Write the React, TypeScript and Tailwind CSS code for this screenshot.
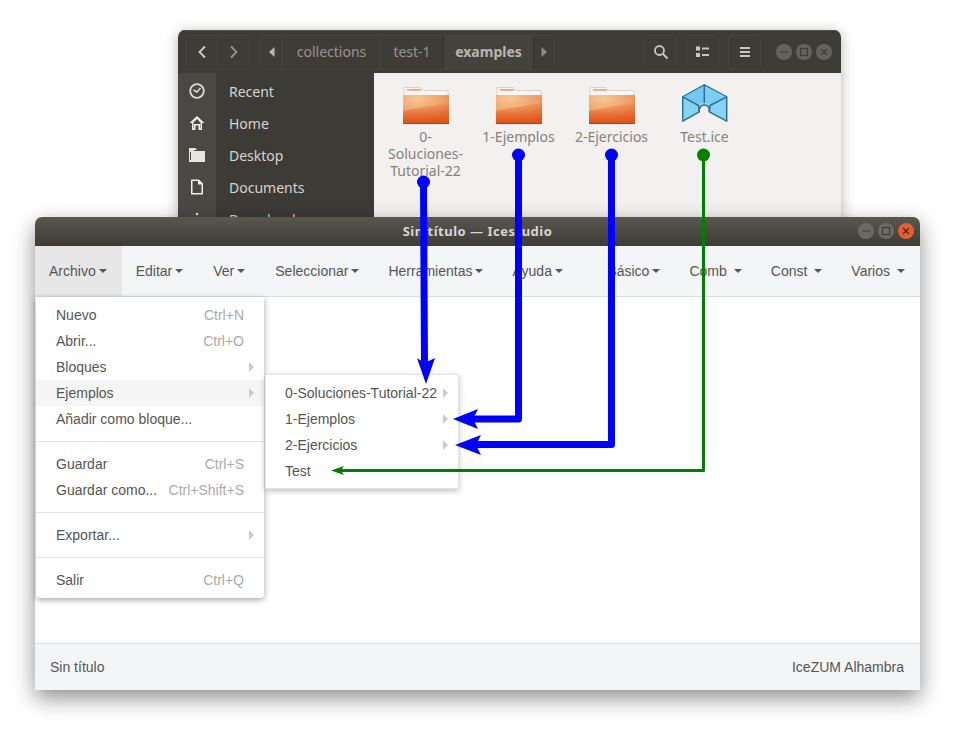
import React from 'react';

const Folder: React.FC<{ id: string }> = ({ id }) => (
    <svg width="48" height="41" viewBox="0 0 48 41">
        <defs>
            <radialGradient id={id} cx="0.3" cy="0.1" r="1.2">
                <stop offset="0" stopColor="#f6c796" />
                <stop offset="0.5" stopColor="#ef9f66" />
                <stop offset="1" stopColor="#e6642a" />
            </radialGradient>
            <linearGradient id={id + 'b'} x1="0" y1="0" x2="0" y2="1">
                <stop offset="0" stopColor="#e2551a" stopOpacity="0.1" />
                <stop offset="1" stopColor="#e04c12" stopOpacity="0.95" />
            </linearGradient>
        </defs>
        <path d="M2 12V4.500q0-1 1-1H18l3 3h24q1 0 1 1V12z" fill="#f7f6f4" stroke="#cfcbc6" strokeWidth="0.8" />
        <rect x="5" y="5" width="14" height="1.800" fill="#f2a678" />
        <path d="M1 11h46v28q0 1-1 1H2q-1 0-1-1z" fill={`url(#${id})`} />
        <path d="M1 27Q24 22 47 19V39q0 1-1 1H2q-1 0-1-1z" fill={`url(#${id}b)`} />
        <path d="M1 39.500h46" stroke="#a8431a" strokeWidth="1" />
    </svg>
);

const IceIcon: React.FC = () => (
    <svg width="46" height="41" viewBox="0 0 46 41">
        <path d="M22.300 .8L44.700 12.800V37.200L27.300 27.800V26A5 5 0 0 0 17.300 26V27.800L.7 37.200V12.800z" fill="#86d4f4" stroke="#2f6f8f" strokeWidth="1.500" strokeLinejoin="round" />
        <path d="M22.300 1.500L1.500 13L15 21Q20 17 22.300 19z" fill="#72c8f0" />
        <path d="M22.300 1.500L44 13L30 21Q25 17 22.300 19z" fill="#7bcdf2" />
        <path d="M22.300 .8V19M.7 12.800L16.500 21.500L17.300 27.800M44.700 12.800L28 21.500L27.300 27.800" fill="none" stroke="#2f6f8f" strokeWidth="1.500" />
    </svg>
);

const sideIcons: Record<string, React.ReactNode> = {
    Recent: (
        <g fill="none" stroke="#dedcd6" strokeWidth="1.800">
            <circle cx="8" cy="8" r="6.800" />
            <path d="M4.500 7L8 9L11.500 5" strokeWidth="1.500" />
        </g>
    ),
    Home: (
        <path d="M8 1L.5 8H3V15H6.500V10.500H9.500V15H13V8H15.500zM4.500 7.500L8 4L11.500 7.500V13.500H11V9H5V13.500H4.500z" fill="#f0eeea" />
    ),
    Desktop: (
        <path d="M0 1H6.500L8 3H5V4H16V15H0zM2 5V13H1V5z" fill="#e6e4e0" fillRule="evenodd" />
    ),
    Documents: (
        <path d="M2 0.500H10L14 4.500V15.500H2zM3.500 2V14H12.500V5.500H9V2z" fill="#f0eeea" fillRule="evenodd" />
    ),
    Downloads: <circle cx="8" cy="3" r="1.300" fill="#dedcd6" />,
};

const SideRow: React.FC<{ label: string }> = ({ label }) => (
    <div className="flex items-center h-[32px] shrink-0">
        <div className="w-[38px] flex justify-center">
            <svg width="16" height="16" viewBox="0 0 16 16">{sideIcons[label]}</svg>
        </div>
        <span className="ml-[13px] text-[14px] text-[#d6d4ce]">{label}</span>
    </div>
);

const FileItem: React.FC<{ name: string; icon: React.ReactNode }> = ({ name, icon }) => (
    <div className="w-[93px] flex flex-col items-center">
        <div className="h-[41px] flex items-end">{icon}</div>
        <div className="mt-[3px] w-[86px] text-center text-[14px] leading-[17px] text-[#85817c] break-words">{name}</div>
    </div>
);

const HeadButton: React.FC<{ children: React.ReactNode }> = ({ children }) => (
    <div className="w-[33px] h-[35px] rounded-[4px] border border-[#47443f] flex items-center justify-center">{children}</div>
);

const WinButton: React.FC<{ kind: 'min' | 'max' | 'close'; bg: string; stroke: string }> = ({ kind, bg, stroke }) => (
    <svg width="16" height="16" viewBox="0 0 16 16" className={bg + ' rounded-full'}>
        {kind === 'min' && <path d="M4 8H12" stroke={stroke} strokeWidth="1.200" />}
        {kind === 'max' && <rect x="4.500" y="4.500" width="7" height="7" fill="none" stroke={stroke} strokeWidth="1.200" />}
        {kind === 'close' && <path d="M5 5L11 11M11 5L5 11" stroke={stroke} strokeWidth="1.200" />}
    </svg>
);

const FilesWindow: React.FC = () => (
    <div className="absolute left-[178px] top-[30px] w-[663px] h-[220px] rounded-t-[7px] overflow-hidden flex flex-col shadow-[0_2px_14px_rgba(0,0,0,0.3)] font-['Noto_Sans','Open_Sans',sans-serif]">
        <div className="h-[43px] bg-[#3f3c37] flex items-center pl-[8px] pr-[9px] shrink-0 border-t border-[#55524c]">
            <div className="flex w-[64px] h-[35px] rounded-[4px] border border-[#47443f]">
                <div className="w-[32px] flex items-center justify-center border-r border-[#47443f]">
                    <svg width="10" height="14" viewBox="0 0 10 14"><path d="M8 1.500L2.500 7L8 12.500" fill="none" stroke="#cfccc6" strokeWidth="1.800" /></svg>
                </div>
                <div className="w-[32px] flex items-center justify-center">
                    <svg width="10" height="14" viewBox="0 0 10 14"><path d="M2 1.500L7.500 7L2 12.500" fill="none" stroke="#96938c" strokeWidth="1.800" /></svg>
                </div>
            </div>
            <div className="ml-[10px] flex h-[35px] w-[295px] rounded-[4px] border border-[#47443f] items-stretch">
                <div className="w-[22px] flex items-center justify-center border-r border-[#47443f]">
                    <svg width="6" height="10" viewBox="0 0 6 10"><path d="M5.500 0V10L0 5z" fill="#b8b5ae" /></svg>
                </div>
                <div className="w-[98px] flex items-center justify-center pb-[1px] text-[14px] text-[#97948d] border-r border-[#47443f]">collections</div>
                <div className="w-[62px] flex items-center justify-center pb-[1px] text-[14px] text-[#97948d]">test-1</div>
                <div className="w-[91px] flex items-center justify-center pb-[1px] text-[14px] font-bold text-[#b9b6ae] bg-[#45423c] border-x border-[#35322e]">examples</div>
                <div className="flex-1 flex items-center justify-center">
                    <svg width="6" height="10" viewBox="0 0 6 10"><path d="M.5 0V10L6 5z" fill="#8f8c85" /></svg>
                </div>
            </div>
            <div className="ml-[89px]">
                <HeadButton>
                    <svg width="16" height="16" viewBox="0 0 16 16"><circle cx="6.500" cy="6.500" r="4.500" fill="none" stroke="#c9c6bf" strokeWidth="1.800" /><path d="M10 10L14.500 14.500" stroke="#c9c6bf" strokeWidth="2" /></svg>
                </HeadButton>
            </div>
            <div className="ml-[9px]">
                <HeadButton>
                    <svg width="14" height="12" viewBox="0 0 14 12"><path d="M0 .5H4V4.500H0zM0 7H4V11H0zM6 1.500H13V3.500H6zM6 8H13V10H6z" fill="#c9c6bf" /></svg>
                </HeadButton>
            </div>
            <div className="ml-[9px]">
                <HeadButton>
                    <svg width="12" height="12" viewBox="0 0 12 12"><path d="M1 1H11V3H1zM1 5H11V7H1zM1 9H11V11H1z" fill="#c9c6bf" /></svg>
                </HeadButton>
            </div>
            <div className="ml-auto flex gap-[4px]">
                <WinButton kind="min" bg="bg-[#65625b]" stroke="#3f3c37" />
                <WinButton kind="max" bg="bg-[#65625b]" stroke="#3f3c37" />
                <WinButton kind="close" bg="bg-[#65625b]" stroke="#3f3c37" />
            </div>
        </div>
        <div className="flex flex-1 min-h-0">
            <div className="relative w-[196px] bg-[#3d3b36] pt-[2px] flex flex-col shrink-0">
                <div className="absolute left-0 top-0 bottom-0 w-[38px] bg-[#4a4843]" />
                <div className="relative flex flex-col">
                    <SideRow label="Recent" />
                    <SideRow label="Home" />
                    <SideRow label="Desktop" />
                    <SideRow label="Documents" />
                    <SideRow label="Downloads" />
                </div>
            </div>
            <div className="flex-1 bg-[#f2f1f0] pl-[5px] pt-[11px] flex items-start">
                <FileItem name="0-Soluciones-Tutorial-22" icon={<Folder id="f0" />} />
                <FileItem name="1-Ejemplos" icon={<Folder id="f1" />} />
                <FileItem name="2-Ejercicios" icon={<Folder id="f2" />} />
                <FileItem name="Test.ice" icon={<IceIcon />} />
            </div>
        </div>
    </div>
);

const Caret: React.FC = () => (
    <span className="w-0 h-0 border-x-[4px] border-t-[4px] border-x-transparent border-t-[#555555]" />
);

const ToolItem: React.FC<{ label: string; active?: boolean; wide?: boolean; roomy?: boolean }> = ({ label, active, wide, roomy }) => (
    <div className={`flex items-center pl-[14px] ${roomy ? 'pr-[16px]' : 'pr-[15px]'} ${wide ? 'gap-[7px]' : 'gap-[3px]'} ${active ? 'bg-[#e7e7e7]' : ''}`}>
        <span>{label}</span>
        <Caret />
    </div>
);

const MenuArrow: React.FC = () => (
    <span className="ml-auto -mr-[10px] w-0 h-0 border-y-[5px] border-l-[5px] border-y-transparent border-l-[#cccccc]" />
);

const MenuRow: React.FC<{ label: string; shortcut?: string; arrow?: boolean; hover?: boolean; sub?: boolean }> = ({ label, shortcut, arrow, hover, sub }) => (
    <div className={`h-[26px] flex items-center ${sub ? 'pl-[19px]' : 'pl-[20px]'} pr-[20px] ${hover ? 'bg-[#f5f5f5]' : ''}`}>
        <span>{label}</span>
        {shortcut && <span className="ml-auto text-[#aaaaaa]">{shortcut}</span>}
        {arrow && <MenuArrow />}
    </div>
);

const MenuDivider: React.FC = () => <div className="my-[9px] h-px bg-[#e5e5e5]" />;

const IceWindow: React.FC = () => (
    <div className="absolute left-[35px] top-[217px] w-[885px] h-[473px] rounded-t-[7px] flex flex-col bg-white shadow-[0_8px_22px_rgba(0,0,0,0.45)] font-['Liberation_Sans',Arial,sans-serif] text-[14px] text-[#555555]">
        <div className="relative h-[29px] shrink-0 rounded-t-[7px] bg-gradient-to-b from-[#5a5750] to-[#3f3c36] flex items-center justify-center">
            <span className="font-['Noto_Sans','Open_Sans',sans-serif] font-bold text-[13px] tracking-[0.5px] text-[#d8d6cf]">Sin título — Icestudio</span>
            <div className="absolute right-[6px] top-[6px] flex gap-[4px]">
                <WinButton kind="min" bg="bg-[#6d6a63]" stroke="#3f3c37" />
                <WinButton kind="max" bg="bg-[#6d6a63]" stroke="#3f3c37" />
                <WinButton kind="close" bg="bg-[#e4602e]" stroke="#4a2414" />
            </div>
        </div>
        <div className="h-[51px] shrink-0 bg-[#f4f5f7] border-b border-[#d9dde3] flex items-stretch">
            <ToolItem label="Archivo" active />
            <ToolItem label="Editar" roomy />
            <ToolItem label="Ver" roomy />
            <ToolItem label="Seleccionar" />
            <ToolItem label="Herramientas" />
            <ToolItem label="Ayuda" />
            <div className="ml-auto flex items-stretch">
                <ToolItem label="Básico" />
                <ToolItem label="Comb" wide />
                <ToolItem label="Const" wide />
                <ToolItem label="Varios" wide />
            </div>
        </div>
        <div className="flex-1" />
        <div className="h-[47px] shrink-0 bg-[#f4f5f7] border-t border-[#d9dde3] flex items-center justify-between pl-[15px] pr-[16px]">
            <span>Sin título</span>
            <span>IceZUM Alhambra</span>
        </div>

        <div className="absolute left-[1px] top-[80px] w-[228px] py-[5px] bg-white rounded-b-[4px] shadow-[0_2px_6px_rgba(0,0,0,0.35)]">
            <MenuRow label="Nuevo" shortcut="Ctrl+N" />
            <MenuRow label="Abrir..." shortcut="Ctrl+O" />
            <MenuRow label="Bloques" arrow />
            <MenuRow label="Ejemplos" arrow hover />
            <MenuRow label="Añadir como bloque..." />
            <MenuDivider />
            <MenuRow label="Guardar" shortcut="Ctrl+S" />
            <MenuRow label="Guardar como..." shortcut="Ctrl+Shift+S" />
            <MenuDivider />
            <MenuRow label="Exportar..." arrow />
            <MenuDivider />
            <MenuRow label="Salir" shortcut="Ctrl+Q" />
        </div>
        <div className="absolute left-[230px] top-[157px] w-[194px] pt-[5px] pb-[4px] bg-white border border-[#e3e3e3] shadow-[0_2px_6px_rgba(0,0,0,0.25)]">
            <MenuRow label="0-Soluciones-Tutorial-22" arrow sub />
            <MenuRow label="1-Ejemplos" arrow sub />
            <MenuRow label="2-Ejercicios" arrow sub />
            <MenuRow label="Test" sub />
        </div>
    </div>
);

// las flechas que unen los ficheros con las entradas del menu
const Arrows: React.FC = () => (
    <svg className="absolute left-0 top-0 pointer-events-none" width="957" height="732" viewBox="0 0 957 732">
        <g fill="#0000ff">
            <circle cx="423.500" cy="182" r="6.500" />
            <path d="M423.500 182L424.500 365" stroke="#0000ff" strokeWidth="7" fill="none" />
            <path d="M417 358L424.500 363L435 358L426 384z" />
            <circle cx="518.500" cy="155" r="6.500" />
            <path d="M518.500 155V419H470" stroke="#0000ff" strokeWidth="7" strokeLinejoin="round" fill="none" />
            <path d="M453 419L478 409L473 419L478 429z" />
            <circle cx="611.500" cy="155" r="6.500" />
            <path d="M611.500 155V444.500H472" stroke="#0000ff" strokeWidth="7" strokeLinejoin="round" fill="none" />
            <path d="M455 445L481 435L476 445L481 455z" />
        </g>
        <g fill="#008000">
            <circle cx="703.500" cy="155" r="6.500" />
            <path d="M703.500 155V470.500H338" stroke="#008000" strokeWidth="3" strokeLinejoin="round" fill="none" />
            <path d="M331 470.500L344 466L341 470.500L344 475z" />
        </g>
    </svg>
);

export default function App() {
    return (
        <div className="relative w-[957px] h-[732px] bg-white overflow-hidden">
            <FilesWindow />
            <IceWindow />
            <Arrows />
        </div>
    );
}
